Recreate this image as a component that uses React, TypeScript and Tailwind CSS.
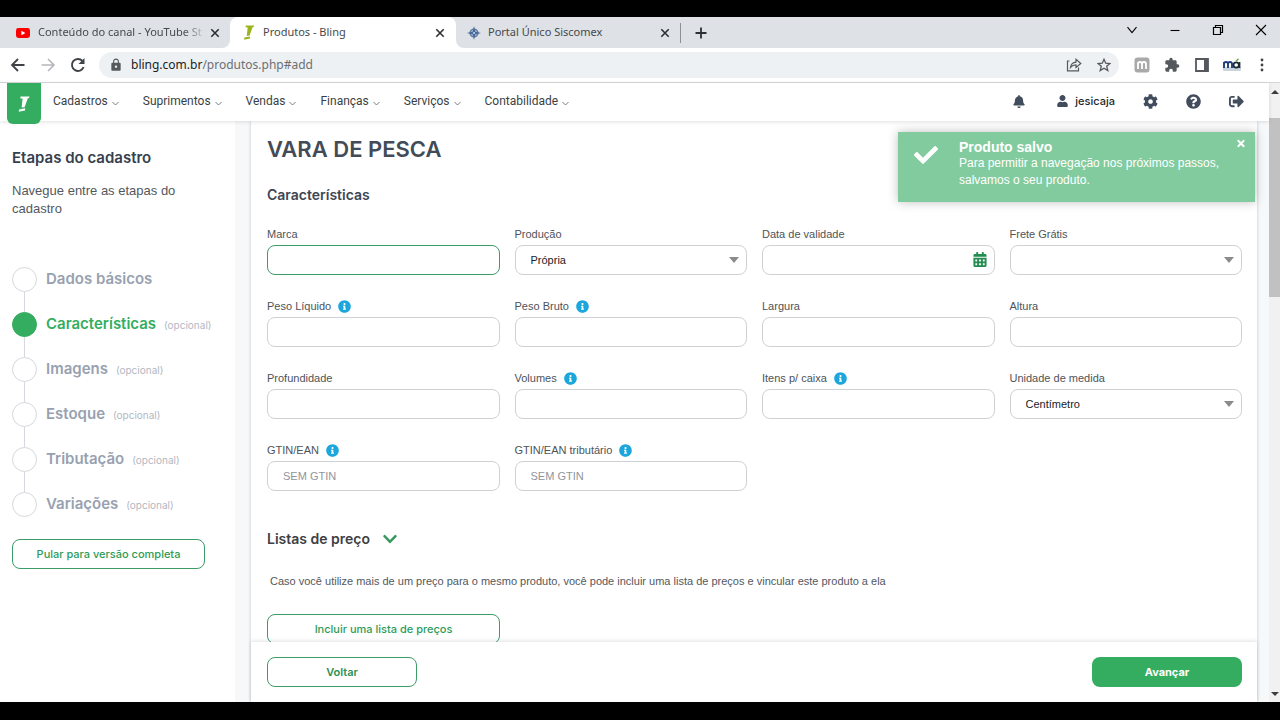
import React from 'react';
import {
  FaBell,
  FaCalendarAlt,
  FaCheck,
  FaChevronDown,
  FaCog,
  FaInfoCircle,
  FaQuestionCircle,
  FaSignOutAlt,
  FaTimes,
  FaUser,
} from 'react-icons/fa';
import { MdExtension, MdLock } from 'react-icons/md';

const menus = ['Cadastros', 'Suprimentos', 'Vendas', 'Finanças', 'Serviços', 'Contabilidade'];

const steps = [
  { label: 'Dados básicos', optional: false },
  { label: 'Características', optional: true, active: true },
  { label: 'Imagens', optional: true },
  { label: 'Estoque', optional: true },
  { label: 'Tributação', optional: true },
  { label: 'Variações', optional: true },
];

type FieldData = {
  id: string;
  label: string;
  kind?: 'text' | 'select' | 'date';
  value?: string;
  placeholder?: string;
  info?: boolean;
  focused?: boolean;
};

const fields: FieldData[] = [
  { id: 'marca', label: 'Marca', focused: true },
  { id: 'producao', label: 'Produção', kind: 'select', value: 'Própria' },
  { id: 'validade', label: 'Data de validade', kind: 'date' },
  { id: 'frete', label: 'Frete Grátis', kind: 'select', value: '' },
  { id: 'pesoLiq', label: 'Peso Líquido', info: true },
  { id: 'pesoBruto', label: 'Peso Bruto', info: true },
  { id: 'largura', label: 'Largura' },
  { id: 'altura', label: 'Altura' },
  { id: 'profundidade', label: 'Profundidade' },
  { id: 'volumes', label: 'Volumes', info: true },
  { id: 'itens', label: 'Itens p/ caixa', info: true },
  { id: 'unidade', label: 'Unidade de medida', kind: 'select', value: 'Centímetro' },
  { id: 'gtin', label: 'GTIN/EAN', placeholder: 'SEM GTIN', info: true },
  { id: 'gtinTrib', label: 'GTIN/EAN tributário', placeholder: 'SEM GTIN', info: true },
];

const BlingMark: React.FC<{ className?: string }> = ({ className }) => (
  <svg viewBox="0 0 12 16" className={className} fill="currentColor" aria-hidden="true">
    <path d="M2.600 .6 11.600 .4 11 2 9.800 2.300 6.600 11.200 3.600 11.600 4.600 2.600 2.300 2.500z" />
    <path d="M1 13.400 7.200 12.200 7 14.400 .8 15.800z" />
  </svg>
);

const CloseButton: React.FC<{ label: string }> = ({ label }) => (
  <button aria-label={label} className="flex h-4 w-4 items-center justify-center text-[#2d3033]">
    <svg viewBox="0 0 10 10" className="h-[10px] w-[10px]" stroke="currentColor" strokeWidth="1.6">
      <path d="M1.300 1.300 8.700 8.700M8.700 1.300 1.300 8.700" />
    </svg>
  </button>
);

const TabStrip: React.FC = () => (
  <div className="flex h-[31px] shrink-0 bg-[#dee1e6] font-['Noto_Sans',sans-serif] text-[11px] text-[#45494d]">
    <div className="w-[230px] bg-white">
      <div className="flex h-full items-center rounded-br-lg bg-[#dee1e6] pr-[7px] pl-4">
        <svg viewBox="0 0 14 10" className="mr-2 h-[10px] w-[14px]">
          <rect width="14" height="10" rx="2.4" fill="#f00" />
          <path d="M5.400 2.800 9.400 5 5.400 7.200z" fill="#fff" />
        </svg>
        <span className="min-w-0 flex-1 whitespace-nowrap [mask-image:linear-gradient(to_right,black_86%,transparent)]">
          Conteúdo do canal - YouTube St
        </span>
        <CloseButton label="Fechar Conteúdo do canal" />
      </div>
    </div>
    <div className="flex w-[226px] items-center rounded-t-lg bg-white pl-[13px] pr-2">
      <BlingMark className="mr-2 h-[15px] w-3 text-[#9ab51c]" />
      <span className="flex-1 whitespace-nowrap">Produtos - Bling</span>
      <CloseButton label="Fechar Produtos" />
    </div>
    <div className="flex-1 bg-white">
      <div className="flex h-full items-center rounded-bl-lg bg-[#dee1e6]">
        <div className="flex h-full w-[217px] items-center pl-[11px]">
          <svg viewBox="0 0 14 14" className="mr-[7px] h-[14px] w-[14px]">
            <circle cx="7" cy="7" r="3.800" fill="none" stroke="#5d7da6" strokeWidth="1.6" />
            <path d="M7 0 8.400 5.600 14 7 8.400 8.400 7 14 5.600 8.400 0 7 5.600 5.600z" fill="#4a6b99" />
            <circle cx="7" cy="7" r="1.100" fill="#c7d5e6" />
          </svg>
          <span className="flex-1 whitespace-nowrap">Portal Único Siscomex</span>
          <CloseButton label="Fechar Portal Único Siscomex" />
        </div>
        <span className="ml-[7px] h-5 w-px bg-[#8d9196]" />
        <button aria-label="Nova guia" className="ml-[14px] flex h-3 w-3 items-center justify-center text-[#2d3033]">
          <svg viewBox="0 0 12 12" className="h-3 w-3" stroke="currentColor" strokeWidth="1.8">
            <path d="M6 .5V11.500M.5 6H11.500" />
          </svg>
        </button>
        <div className="mb-[6px] ml-auto flex gap-[5px] text-black">
          <button aria-label="Pesquisar guias" className="flex w-[38px] justify-center">
            <svg viewBox="0 0 12 12" className="h-3 w-3" fill="none" stroke="currentColor" strokeWidth="1.1">
              <path d="M1.500 3.200 6 8.600 10.500 3.200" />
            </svg>
          </button>
          <button aria-label="Minimizar" className="flex w-[38px] justify-center">
            <svg viewBox="0 0 12 12" className="h-3 w-3" stroke="currentColor" strokeWidth="1.1">
              <path d="M1.500 6.500H10.500" />
            </svg>
          </button>
          <button aria-label="Restaurar" className="flex w-[38px] justify-center">
            <svg viewBox="0 0 12 12" className="h-3 w-3" fill="none" stroke="currentColor" strokeWidth="1.2">
              <path d="M1.500 3.500H8.500V10.500H1.500zM3.500 3.500V1.500H10.500V8.500H8.500" />
            </svg>
          </button>
          <button aria-label="Fechar janela" className="flex w-[38px] justify-center">
            <svg viewBox="0 0 12 12" className="h-3 w-3" stroke="currentColor" strokeWidth="1.1">
              <path d="M1 1 11 11M11 1 1 11" />
            </svg>
          </button>
        </div>
      </div>
    </div>
  </div>
);

const Toolbar: React.FC = () => (
  <div className="flex h-[35px] shrink-0 items-center border-b border-[#d5d7da] bg-white pr-[3px] pl-[3px] text-[#55595d]">
    <button aria-label="Voltar página" className="flex w-[30px] justify-center">
      <svg viewBox="0 0 16 16" className="h-4 w-4" fill="none" stroke="#3f4347" strokeWidth="1.8">
        <path d="M14.500 8H2.200M8 2 2 8 8 14" />
      </svg>
    </button>
    <button aria-label="Avançar página" className="flex w-[30px] justify-center">
      <svg viewBox="0 0 16 16" className="h-4 w-4" fill="none" stroke="#b4b7ba" strokeWidth="1.6">
        <path d="M1.500 8H13.800M8 2 14 8 8 14" />
      </svg>
    </button>
    <button aria-label="Recarregar" className="flex w-[30px] justify-center">
      <svg viewBox="0 0 16 16" className="h-4 w-4" fill="none" stroke="#3f4347" strokeWidth="1.900">
        <path d="M13.600 10A6 6 0 1 1 12.400 3.900" />
        <path d="M14.500 1V7H8.500z" fill="#3f4347" stroke="none" />
      </svg>
    </button>
    <div className="ml-[6px] flex h-[26px] flex-1 items-center rounded-full bg-[#eef1f3] pl-[10px]">
      <MdLock className="mr-2 h-[14px] w-[14px]" />
      <span className="flex-1 font-['Noto_Sans',sans-serif] text-[12px] text-[#6b6f73]">
        <span className="text-[#202124]">bling.com.br</span>/produtos.php#add
      </span>
      <button aria-label="Compartilhar" className="flex w-[30px] justify-center">
        <svg viewBox="0 0 16 14" className="h-[14px] w-4" fill="none" stroke="currentColor" strokeWidth="1.2">
          <path d="M3.500 3H1.500V12.800H12.500V9.500" />
          <path d="M4.500 9.500C5 6 7 4.400 10 4.200V1.300L14.800 5.500 10 9.500V6.900C7.500 6.900 6 7.600 4.500 9.500z" />
        </svg>
      </button>
      <button aria-label="Favoritar" className="flex w-[30px] justify-center">
        <svg viewBox="0 0 14 14" className="h-[14px] w-[14px]" fill="none" stroke="currentColor" strokeWidth="1.3">
          <path d="M7 1.300 8.700 5.200 13 5.500 9.700 8.300 10.800 12.500 7 10.200 3.200 12.500 4.300 8.300 1 5.500 5.300 5.200z" />
        </svg>
      </button>
    </div>
    <button aria-label="Extensão m" className="ml-2 flex w-[30px] justify-center">
      <svg viewBox="0 0 16 16" className="h-4 w-4">
        <rect x=".5" y=".5" width="15" height="15" rx="3" fill="#a9a9a9" />
        <path d="M4 12V5M4 7Q4 5 6 5T8 7V12M8 7Q8 5 10 5T12 7V12" fill="none" stroke="#fff" strokeWidth="1.800" />
      </svg>
    </button>
    <button aria-label="Extensões" className="flex w-[30px] justify-center">
      <MdExtension className="h-4 w-4" />
    </button>
    <button aria-label="Painel lateral" className="flex w-[30px] justify-center">
      <svg viewBox="0 0 14 14" className="h-[14px] w-[14px]">
        <path d="M1 1H13V13H1z" fill="none" stroke="currentColor" strokeWidth="1.800" />
        <path d="M9 1H13V13H9z" fill="currentColor" />
      </svg>
    </button>
    <button aria-label="Perfil" className="flex w-[30px] justify-center">
      <svg viewBox="0 0 18 14" className="h-[14px] w-[18px]">
        <rect y="9" width="18" height="4" rx="1" fill="#c9d5dc" />
        <path d="M1 10V4M1 6Q1 4 3 4T5 6V10M5 6Q5 4 7 4T9 6V10" fill="none" stroke="#1f3f7c" strokeWidth="1.900" />
        <circle cx="13.200" cy="7" r="2.700" fill="none" stroke="#1c2b33" strokeWidth="1.800" />
        <path d="M16.500 4V10" stroke="#1c2b33" strokeWidth="1.800" />
        <path d="M13 3.200 15.500 .8" stroke="#6ea64a" strokeWidth="1.400" />
      </svg>
    </button>
    <button aria-label="Mais opções" className="flex w-[30px] justify-center">
      <svg viewBox="0 0 4 14" className="h-[14px] w-1" fill="#3f4347">
        <circle cx="2" cy="2" r="1.400" />
        <circle cx="2" cy="7" r="1.400" />
        <circle cx="2" cy="12" r="1.400" />
      </svg>
    </button>
  </div>
);

const Header: React.FC = () => (
  <header className="relative z-10 flex h-[38px] shrink-0 items-center bg-white pr-[25px] pb-[2px] pl-[7px] text-[#414c5c] shadow-[0_1px_4px_rgba(0,0,0,0.12)]">
    <a
      href="#inicio"
      aria-label="Bling"
      className="flex h-[41px] w-[34px] shrink-0 items-center justify-center self-start rounded-b-md bg-[#34ad61] text-white"
    >
      <BlingMark className="h-4 w-3" />
    </a>
    <nav className="ml-3 flex gap-6 font-['Roboto',sans-serif] text-[12px] text-[#3a3f44]">
      {menus.map((menu) => (
        <a key={menu} href={`#${menu.toLowerCase()}`} className="flex items-center gap-1">
          {menu}
          <svg viewBox="0 0 7 5" className="mt-1 h-[5px] w-[7px]" fill="none" stroke="#777c82">
            <path d="M.5 1 3.500 4 6.500 1" />
          </svg>
        </a>
      ))}
    </nav>
    <div className="ml-auto flex items-center">
      <button aria-label="Notificações">
        <FaBell className="h-[13px] w-3" />
      </button>
      <button className="ml-8 flex items-center gap-[7px] font-['Inter',sans-serif] text-[11px] font-medium text-[#22272d]">
        <FaUser className="h-3 w-[11px] text-[#414c5c]" />
        jesicaja
      </button>
      <button aria-label="Configurações" className="ml-7">
        <FaCog className="h-[15px] w-[15px]" />
      </button>
      <button aria-label="Ajuda" className="ml-7">
        <FaQuestionCircle className="h-[15px] w-[15px]" />
      </button>
      <button aria-label="Sair" className="ml-7">
        <FaSignOutAlt className="h-[15px] w-[15px]" />
      </button>
    </div>
  </header>
);

const Sidebar: React.FC = () => (
  <aside className="w-[235px] shrink-0 bg-white px-3 pt-[27px]">
    <h2 className="font-['Inter',sans-serif] text-[15px] leading-5 font-semibold text-[#36404e]">Etapas do cadastro</h2>
    <p className="mt-[14px] pr-6 text-[13px] leading-[18px] text-[#53585e]">Navegue entre as etapas do cadastro</p>
    <ol className="mt-[49px] font-['Inter',sans-serif] text-[15px] font-semibold text-[#98a1b0]">
      {steps.map((step, index) => (
        <li key={step.label}>
          {index > 0 && <div className="ml-3 h-5 w-px bg-[#d5d8dc]" />}
          <a href={`#etapa-${index + 1}`} className="flex h-[25px] items-center">
            <span
              className={`h-[25px] w-[25px] rounded-full border ${
                step.active ? 'border-[#34ad61] bg-[#34ad61]' : 'border-[#d5d8dc] bg-white'
              }`}
            />
            <span className={`ml-[9px] ${step.active ? 'text-[#34ad61]' : ''}`}>{step.label}</span>
            {step.optional && <span className="mt-[2px] ml-2 text-[10px] font-normal text-[#b3b8c2]">(opcional)</span>}
          </a>
        </li>
      ))}
    </ol>
    <button className="mt-[22px] h-[30px] w-[193px] rounded-lg border border-[#3c9c68] font-['Inter',sans-serif] text-[11px] font-medium text-[#2d9c58]">
      Pular para versão completa
    </button>
  </aside>
);

const inputClass = 'h-[30px] w-full rounded-lg border bg-white px-[15px] text-[11px] outline-none placeholder:text-[#8f949c]';

const Field: React.FC<{ field: FieldData }> = ({ field }) => (
  <div>
    <div className="flex h-[18px] items-center gap-[7px]">
      <label htmlFor={field.id} className="text-[11px] text-[#4e5359]">
        {field.label}
      </label>
      {field.info && <FaInfoCircle className="h-[13px] w-[13px] text-[#1ca7dc]" />}
    </div>
    <div className="relative mt-[2px]">
      {field.kind === 'select' ? (
        <>
          <select
            id={field.id}
            defaultValue={field.value}
            className="h-[30px] w-full appearance-none rounded-lg border border-[#cfd1d4] bg-white px-[15px] text-[11px] text-[#202326]"
          >
            <option>{field.value}</option>
          </select>
          <svg
            viewBox="0 0 10 6"
            className="pointer-events-none absolute top-3 right-2 h-[6px] w-[10px]"
            fill="#8b8b8b"
          >
            <path d="M0 0H10L5 6z" />
          </svg>
        </>
      ) : (
        <input
          id={field.id}
          type="text"
          placeholder={field.placeholder}
          className={`${inputClass} ${field.focused ? 'border-[#3c9c68]' : 'border-[#cfd1d4]'}`}
        />
      )}
      {field.kind === 'date' && (
        <button aria-label="Abrir calendário" className="absolute top-[7px] right-2 text-[#238c50]">
          <FaCalendarAlt className="h-[15px] w-[14px]" />
        </button>
      )}
    </div>
  </div>
);

const Toast: React.FC = () => (
  <div
    role="status"
    className="absolute top-[11px] right-[14px] z-20 flex h-[70px] w-[357px] bg-[#82cb9e] text-white shadow-[0_0_10px_rgba(0,0,0,0.25)]"
  >
    <FaCheck className="mt-[11px] ml-4 h-6 w-6" />
    <div className="ml-[21px] pt-[7px] text-[12px] leading-[17px]">
      <strong className="block text-[14px] leading-4">Produto salvo</strong>
      Para permitir a navegação nos próximos passos,
      <br />
      salvamos o seu produto.
    </div>
    <button aria-label="Fechar aviso" className="absolute top-[6px] right-[9px]">
      <FaTimes className="h-[11px] w-[10px]" />
    </button>
  </div>
);

const ProductForm: React.FC = () => (
  <main className="flex min-w-0 flex-1 flex-col bg-white shadow-[0_0_3px_rgba(40,60,80,0.25)]">
    <div className="min-h-0 flex-1 overflow-hidden pt-[14px] pr-[15px] pl-4">
      <h1 className="font-['Inter',sans-serif] text-[22px] leading-7 font-semibold text-[#434b57]">VARA DE PESCA</h1>
      <h2 className="mt-[22px] font-['Inter',sans-serif] text-[14px] leading-5 font-semibold text-[#3d4653]">
        Características
      </h2>
      <form className="mt-5 grid grid-cols-4 gap-x-[15px] gap-y-[22px]">
        {fields.map((field) => (
          <Field key={field.id} field={field} />
        ))}
      </form>
      <h2 className="mt-[38px] flex items-center gap-3 font-['Inter',sans-serif] text-[14px] leading-5 font-semibold text-[#3d4043]">
        Listas de preço
        <FaChevronDown className="h-4 w-4 text-[#36995f]" />
      </h2>
      <p className="mt-6 pl-[3px] text-[11px] leading-4 text-[#53585e]">
        Caso você utilize mais de um preço para o mesmo produto, você pode incluir uma lista de preços e vincular este
        produto a ela
      </p>
      <button className="mt-[25px] h-[30px] w-[233px] rounded-lg border border-[#3c9c68] font-['Inter',sans-serif] text-[11px] font-medium text-[#2d9c58]">
        Incluir uma lista de preços
      </button>
    </div>
    <footer className="flex h-[60px] shrink-0 justify-between bg-white py-[15px] pr-[15px] pl-4 font-['Inter',sans-serif] text-[11px] shadow-[0_-1px_4px_rgba(0,0,0,0.12)]">
      <button className="h-[30px] w-[150px] rounded-lg border border-[#3c9c68] font-semibold text-[#2d8f55]">
        Voltar
      </button>
      <button className="h-[30px] w-[150px] rounded-lg bg-[#34ad61] font-bold text-white">Avançar</button>
    </footer>
  </main>
);

const Scrollbar: React.FC = () => (
  <div className="flex w-[11px] shrink-0 flex-col items-center bg-[#f1f1f1]">
    <svg viewBox="0 0 8 4" className="mt-[7px] h-1 w-2" fill="#3c3c3c">
      <path d="M4 0 8 4H0z" />
    </svg>
    <div className="mt-6 h-[179px] w-full bg-[#c1c1c1]" />
    <svg viewBox="0 0 8 4" className="mt-auto mb-[6px] h-1 w-2" fill="#3c3c3c">
      <path d="M0 0H8L4 4z" />
    </svg>
  </div>
);

export default function App() {
  return (
    <div className="flex h-screen flex-col overflow-hidden bg-black pt-[17px] pb-[18px] font-['Liberation_Sans',Arial,sans-serif]">
      <TabStrip />
      <Toolbar />
      <div className="flex min-h-0 flex-1 bg-white">
        <div className="flex min-w-0 flex-1 flex-col">
          <Header />
          <div className="relative flex min-h-0 flex-1 overflow-hidden bg-[#f6f8f9] pr-3">
            <Sidebar />
            <div className="w-4 shrink-0" />
            <ProductForm />
            <Toast />
          </div>
        </div>
        <Scrollbar />
      </div>
    </div>
  );
}
